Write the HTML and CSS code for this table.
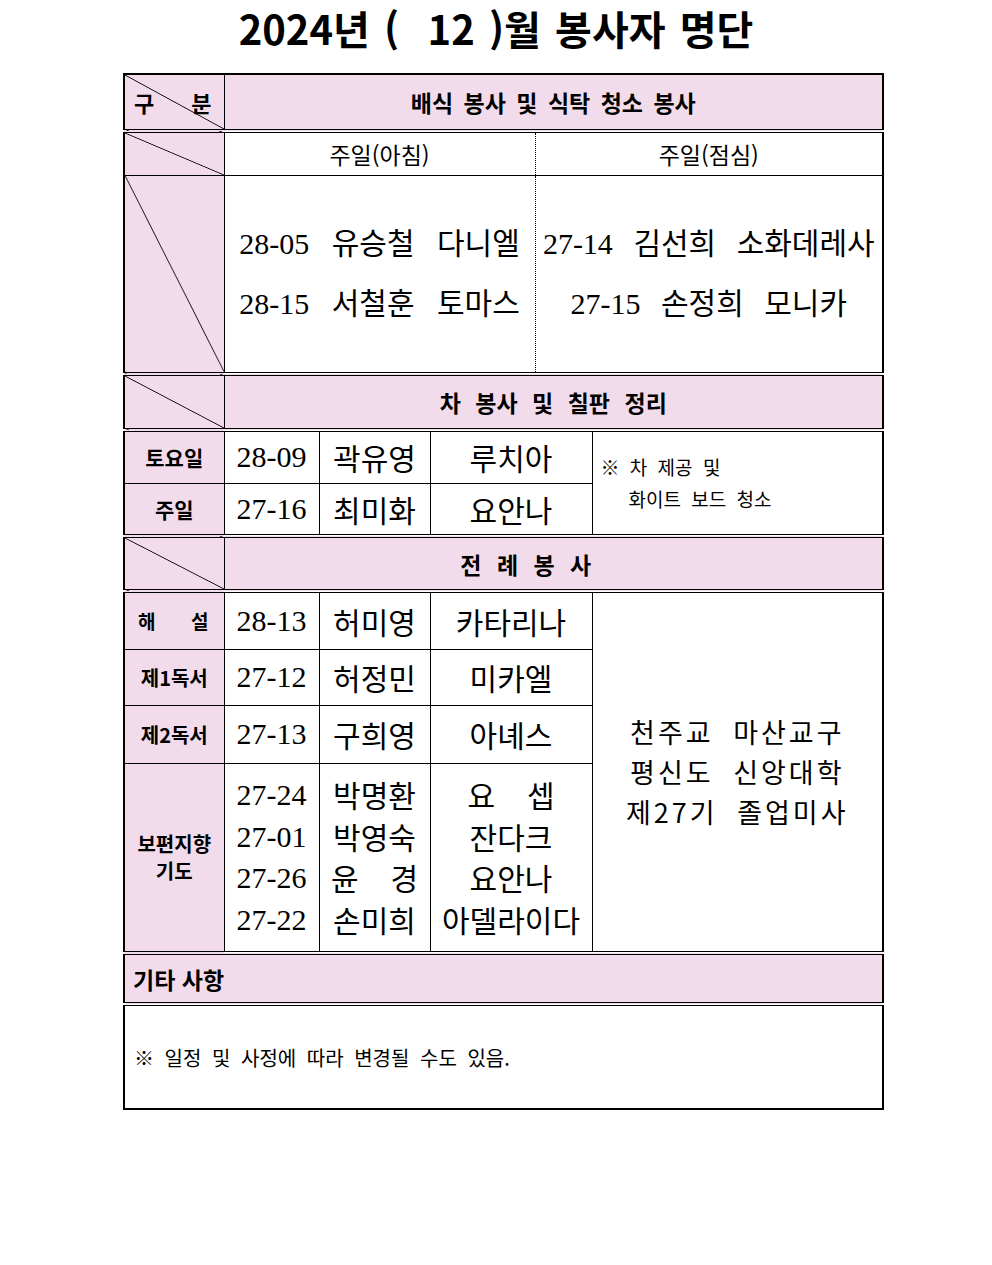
FILE: index.html
```html
<!DOCTYPE html>
<html lang="ko">
<head>
<meta charset="utf-8">
<title>2024년 12월 봉사자 명단</title>
<link rel="stylesheet" href="styles.css">
</head>
<body>
<main class="page">
  <h1 class="title">2024년 (&nbsp; 12 )월 봉사자 명단</h1>
  <table class="roster">
    <colgroup>
      <col class="c-label"><col class="c-num"><col class="c-name"><col class="c-bap1"><col class="c-bap2"><col class="c-note">
    </colgroup>
    <tbody>
      <tr class="r1 dbl">
        <td class="label diag"><div class="spread head-spread"><span>구</span><span>분</span></div></td>
        <td class="sec" colspan="5">배식 봉사 및 식탁 청소 봉사</td>
      </tr>
      <tr class="r2">
        <td class="label diag"></td>
        <td class="sub dotted" colspan="3">주일(아침)</td>
        <td class="sub no-left" colspan="2">주일(점심)</td>
      </tr>
      <tr class="r3 dbl">
        <td class="label diag"></td>
        <td class="big big-l dotted" colspan="3">
          <p class="line"><span class="no">28-05</span> 유승철 다니엘</p>
          <p class="line"><span class="no">28-15</span> 서철훈 토마스</p>
        </td>
        <td class="big no-left" colspan="2">
          <p class="line"><span class="no">27-14</span> 김선희 소화데레사</p>
          <p class="line"><span class="no">27-15</span> 손정희 모니카</p>
        </td>
      </tr>
      <tr class="r4 dbl">
        <td class="label diag"></td>
        <td class="sec sec-wide" colspan="5">차 봉사 및 칠판 정리</td>
      </tr>
      <tr class="r5">
        <td class="label lg">토요일</td>
        <td class="num">28-09</td>
        <td class="name">곽유영</td>
        <td class="name" colspan="2">루치아</td>
        <td class="note" rowspan="2">
          <span class="note-line">※ 차 제공 및</span>
          <span class="note-line indent">화이트 보드 청소</span>
        </td>
      </tr>
      <tr class="r6 dbl">
        <td class="label lg">주일</td>
        <td class="num">27-16</td>
        <td class="name">최미화</td>
        <td class="name" colspan="2">요안나</td>
      </tr>
      <tr class="r7 dbl">
        <td class="label diag"></td>
        <td class="sec sec-spaced" colspan="5">전 례 봉 사</td>
      </tr>
      <tr class="r8">
        <td class="label"><div class="spread role-spread"><span>해</span><span>설</span></div></td>
        <td class="num">28-13</td>
        <td class="name">허미영</td>
        <td class="name" colspan="2">카타리나</td>
        <td class="mass" rowspan="4">
          <p class="mass-line">천주교 마산교구</p>
          <p class="mass-line">평신도 신앙대학</p>
          <p class="mass-line">제27기 졸업미사</p>
        </td>
      </tr>
      <tr class="r9">
        <td class="label">제1독서</td>
        <td class="num">27-12</td>
        <td class="name">허정민</td>
        <td class="name" colspan="2">미카엘</td>
      </tr>
      <tr class="r10">
        <td class="label">제2독서</td>
        <td class="num">27-13</td>
        <td class="name">구희영</td>
        <td class="name" colspan="2">아녜스</td>
      </tr>
      <tr class="r11 dbl">
        <td class="label multi-label">보편지향<br>기도</td>
        <td class="num stack">
          <span>27-24</span><span>27-01</span><span>27-26</span><span>27-22</span>
        </td>
        <td class="name stack">
          <span>박명환</span><span>박영숙</span><span class="wide"><span>윤</span><span>경</span></span><span>손미희</span>
        </td>
        <td class="name stack" colspan="2">
          <span class="wide"><span>요</span><span>셉</span></span><span>잔다크</span><span>요안나</span><span>아델라이다</span>
        </td>
      </tr>
      <tr class="r12 dbl">
        <td class="misc-head" colspan="6">기타 사항</td>
      </tr>
      <tr class="r13">
        <td class="misc" colspan="6">※ 일정 및 사정에 따라 변경될 수도 있음.</td>
      </tr>
    </tbody>
  </table>
</main>
</body>
</html>
```

FILE: styles.css
```css
:root {
  --pink: #f2dcec;
  --ink: #000;
}

html, body {
  margin: 0;
  background: #fff;
}

body {
  width: 992px;
  color: var(--ink);
  font-family: "Noto Sans CJK KR", sans-serif;
}

.page {
  padding-bottom: 40px;
}

.title {
  margin: 0;
  height: 73px;
  line-height: 56px;
  text-align: center;
  font-size: 40px;
  font-weight: 700;
  word-spacing: 3px;
}

.roster {
  margin-left: 123px;
  width: 759px;
  table-layout: fixed;
  border-collapse: collapse;
  border: 2px solid var(--ink);
}

.c-label { width: 100px; }
.c-num { width: 95px; }
.c-name { width: 111px; }
.c-bap1 { width: 105px; }
.c-bap2 { width: 57px; }
.c-note { width: 291px; }

.roster td {
  border: 1px solid var(--ink);
  padding: 0;
  text-align: center;
  vertical-align: middle;
}

.roster tr.dbl {
  border-bottom: 4px double var(--ink);
}

.r1 { height: 57px; }
.r2 { height: 44px; }
.r3 { height: 199px; }
.r4 { height: 56px; }
.r5 { height: 53px; }
.r6 { height: 53px; }
.r7 { height: 55px; }
.r8 { height: 58px; }
.r9 { height: 56px; }
.r10 { height: 58px; }
.r11 { height: 190px; }
.r12 { height: 51px; }
.r13 { height: 105px; }

.label {
  background: var(--pink);
  font-size: 20px;
  font-weight: 700;
}

.label.lg {
  font-size: 21px;
}

.diag {
  background: linear-gradient(to top right,
    var(--pink) calc(50% - 0.8px),
    var(--ink) 50%,
    var(--pink) calc(50% + 0.8px));
}

.spread {
  display: flex;
  justify-content: space-between;
}

.head-spread {
  padding: 0 12px 0 9px;
  font-size: 22px;
}

.role-spread {
  padding: 0 15px 0 13px;
  font-size: 19px;
}

.sec {
  background: var(--pink);
  font-size: 23px;
  font-weight: 700;
  word-spacing: 4px;
}

.sec-wide {
  word-spacing: 8px;
}

.roster td.sec-spaced {
  word-spacing: 9px;
  padding-right: 55px;
}

.sub {
  font-size: 23px;
}

.roster td.dotted {
  border-right: 1px dotted var(--ink);
}

.roster td.no-left {
  border-left-style: none;
}

.big {
  font-family: "Liberation Serif", "Noto Sans CJK KR", serif;
  font-size: 30px;
  word-spacing: 13px;
}

.big-l {
  word-spacing: 15px;
}

.line {
  margin: 0;
  line-height: 60px;
}

.no {
  font-size: 30px;
}

.num {
  font-family: "Liberation Serif", serif;
  font-size: 30px;
}

.name {
  font-size: 30px;
}

.stack {
  line-height: 41.5px;
}

.stack > span {
  display: block;
}

.stack > .wide {
  display: flex;
  justify-content: space-between;
  width: 2.9em;
  margin: 0 auto;
}

.roster td.note {
  text-align: left;
  font-size: 19px;
  line-height: 32px;
  padding-left: 8px;
  word-spacing: 5px;
}

.note-line {
  display: block;
}

.note-line.indent {
  padding-left: 28px;
}

.mass {
  font-size: 27px;
  letter-spacing: 3px;
  word-spacing: 9px;
}

.mass-line {
  margin: 0;
  line-height: 40px;
}

.multi-label {
  line-height: 27px;
}

.misc-head {
  background: var(--pink);
  font-size: 23px;
  font-weight: 700;
}

.roster td.misc-head {
  text-align: left;
  padding-left: 8px;
}

.roster td.misc {
  text-align: left;
  padding-left: 9px;
  font-size: 20px;
  word-spacing: 5px;
}
```
